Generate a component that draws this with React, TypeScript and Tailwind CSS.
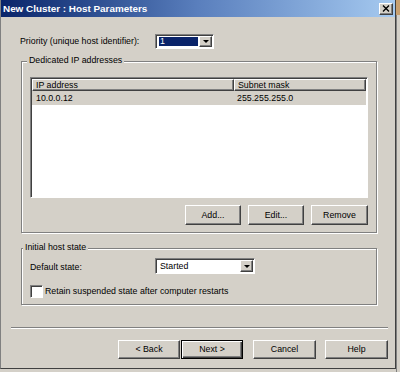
import React from 'react';

const raised =
  'border border-t-white border-l-white border-r-[#404040] border-b-[#404040] shadow-[inset_-1px_-1px_0_#808080] bg-[#d4d0c8]';
const sunken =
  'border border-t-[#808080] border-l-[#808080] border-r-white border-b-white shadow-[inset_1px_1px_0_#404040]';
const etched = 'border border-[#808080] shadow-[inset_1px_1px_0_white,1px_1px_0_white]';

function Arrow() {
  return (
    <div className={`${raised} w-[13px] h-full flex items-center justify-center`}>
      <div className="w-0 h-0 border-l-[3px] border-r-[3px] border-t-[3px] border-l-transparent border-r-transparent border-t-black" />
    </div>
  );
}

function Combo({ value, selected, width }: { value: string; selected?: boolean; width: string }) {
  return (
    <div className={`${sunken} ${width} h-[15px] bg-white flex p-[1px] pl-[2px]`}>
      <div className="flex-1 p-[1px]">
        <div className={`h-full flex items-center pl-[1px] ${selected ? 'bg-[#0a246a] text-white' : 'text-black'}`}>
          {value}
        </div>
      </div>
      <Arrow />
    </div>
  );
}

function Btn({ label, className = '', isDefault }: { label: string; className?: string; isDefault?: boolean }) {
  const look = isDefault
    ? 'border border-black bg-[#d4d0c8] shadow-[inset_1px_1px_0_white,inset_-1px_-1px_0_#404040,inset_-2px_-2px_0_#808080]'
    : raised;
  return (
    <button className={`${look} flex items-center justify-center text-black ${className}`}>{label}</button>
  );
}

export default function App() {
  return (
    <div
      className="w-[400px] h-[372px] bg-[#d4d0c8] flex text-[8.8px] leading-none text-black overflow-hidden"
      style={{ fontFamily: '"Liberation Sans", Arial, sans-serif' }}
    >
      <div className="w-[396px] h-[369px] flex flex-col border-l border-r border-b border-l-[#808080] border-r-[#404040] border-b-[#404040]">
        {/* title bar */}
        <div className="h-[17px] bg-gradient-to-r from-[#0a246a] via-[#5a7fbd] to-[#a6caf0] flex items-center pl-[2px] pr-[2px]">
          <span className="text-white font-bold text-[9.9px]">New Cluster :  Host Parameters</span>
          <div className={`${raised} ml-auto w-[14px] h-[12px] flex items-center justify-center`}>
            <svg width="8" height="7" viewBox="0 0 8 7">
              <path d="M1 0.5 L7 6.5 M7 0.5 L1 6.5" stroke="black" strokeWidth="1.4" />
            </svg>
          </div>
        </div>

        {/* priority */}
        <div className="mt-[17px] pl-[19px] flex items-center">
          <span className="w-[135px]">Priority (unique host identifier):</span>
          <Combo value="1" selected width="w-[59px]" />
        </div>

        {/* dedicated IPs */}
        <div className={`${etched} relative mt-[12px] ml-[20px] w-[356px] h-[172px] pt-[15px] px-[8px]`}>
          <span className="absolute -top-[6px] left-[5px] px-[2px] bg-[#d4d0c8]">Dedicated IP addresses</span>
          <div className={`${sunken} h-[121px] bg-white p-[1px]`}>
            <div className="flex h-[12px]">
              <div className={`${raised} w-[202px] flex items-center pl-[3px]`}>IP address</div>
              <div className={`${raised} flex-1 flex items-center pl-[3px]`}>Subnet mask</div>
            </div>
            <div className="flex h-[14px] bg-[#d4d0c8] items-center">
              <span className="w-[202px] pl-[4px]">10.0.0.12</span>
              <span className="pl-[3px]">255.255.255.0</span>
            </div>
          </div>
          <div className="flex justify-end gap-[7px] mt-[7px]">
            <Btn label="Add..." className="w-[56px] h-[20px]" />
            <Btn label="Edit..." className="w-[56px] h-[20px]" />
            <Btn label="Remove" className="w-[57px] h-[20px]" />
          </div>
        </div>

        {/* initial host state */}
        <div className={`${etched} relative mt-[15px] ml-[20px] w-[356px] h-[57px] pt-[9px] px-[8px]`}>
          <span className="absolute -top-[6px] left-[1px] px-[2px] bg-[#d4d0c8]">Initial host state</span>
          <div className="flex items-center">
            <span className="w-[125px] pt-[3px]">Default state:</span>
            <Combo value="Started" width="w-[100px] h-[16px]" />
          </div>
          <div className="flex items-center mt-[11px]">
            <div className={`${sunken} w-[13px] h-[13px] bg-white`} />
            <span className="ml-[2px]">Retain suspended state after computer restarts</span>
          </div>
        </div>

        {/* separator */}
        <div className="mt-[22px] ml-[10px] w-[377px] h-[2px] border-t border-b border-t-[#808080] border-b-white" />

        {/* wizard buttons */}
        <div className="flex mt-[11px] ml-[117px]">
          <Btn label="< Back" className="w-[62px] h-[19px]" />
          <Btn label="Next >" isDefault className="w-[62px] h-[19px] ml-[1px]" />
          <Btn label="Cancel" className="w-[63px] h-[19px] ml-[10px]" />
          <Btn label="Help" className="w-[63px] h-[19px] ml-[9px]" />
        </div>
      </div>
      <div className="flex-1 flex flex-col">
        <div className="h-[15px] bg-[#c8a070]" />
        <div className="flex-1 border-l border-[#808080]" />
      </div>
    </div>
  );
}
